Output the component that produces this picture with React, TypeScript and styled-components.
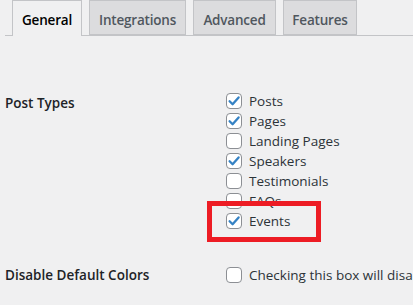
import React from "react";
import styled, { createGlobalStyle } from "styled-components";

const GlobalStyle = createGlobalStyle`
  html, body {
    margin: 0;
    padding: 0;
    background: #f0f0f1;
    font-family: "Open Sans", "Noto Sans", Arial, sans-serif;
    color: #1d2327;
    overflow: hidden;
  }
`;

const Page = styled.div`
  width: 413px;
  height: 305px;
  padding-left: 5px;
  box-sizing: border-box;
  overflow: hidden;
`;

const TabBar = styled.nav`
  display: flex;
  align-items: flex-end;
  height: 36px;
  padding-top: 1px;
  box-sizing: border-box;
  border-bottom: 1px solid #c3c4c7;
`;

const Tab = styled.a<{ $active?: boolean; $w: number }>`
  display: block;
  box-sizing: border-box;
  height: ${(p) => (p.$active ? "36px" : "35px")};
  margin-left: 7px;
  margin-bottom: ${(p) => (p.$active ? "-1px" : "0")};
  width: ${(p) => p.$w}px;
  padding-top: 2px;
  text-align: center;
  border: 1px solid #c3c4c7;
  border-bottom: ${(p) => (p.$active ? "none" : "1px solid #c3c4c7")};
  background: ${(p) => (p.$active ? "#f0f0f1" : "#dcdcde")};
  color: ${(p) => (p.$active ? "#000" : "#50575e")};
  font-size: 13.5px;
  font-weight: 600;
  line-height: 34px;
  letter-spacing: -0.2px;
  white-space: nowrap;
`;

const Table = styled.div`
  display: flex;
  flex-direction: column;
  gap: 34px;
  margin-top: 55px;
`;

const Row = styled.div`
  display: grid;
  grid-template-columns: 221px 1fr;
`;

const Th = styled.div<{ $top?: number }>`
  padding-top: ${(p) => p.$top ?? 0}px;
  font-size: 13.5px;
  line-height: 20px;
  font-weight: 600;
  color: #1d2327;
`;

const Options = styled.div`
  position: relative;
  display: flex;
  flex-direction: column;
  min-width: 0;
`;

const Option = styled.label`
  display: flex;
  align-items: center;
  gap: 7px;
  height: 20px;
  font-size: 13.5px;
  color: #2c3338;
  white-space: nowrap;
`;

const Box = styled.span`
  display: inline-flex;
  align-items: center;
  justify-content: center;
  width: 16px;
  height: 16px;
  box-sizing: border-box;
  flex: none;
  border: 1px solid #8c8f94;
  border-radius: 4px;
  background: #fff;
`;

const Highlight = styled.div`
  position: absolute;
  left: -19px;
  top: 110px;
  width: 114px;
  height: 41px;
  box-sizing: border-box;
  border: 5px solid #ed1c24;
  pointer-events: none;
`;

const Check = ({ on }: { on?: boolean }) => (
  <Box>
    {on && (
      <svg width="14" height="14" viewBox="0 0 14 14">
        <path
          d="M2.6 7.2 L5.6 10.2 L11.6 3.4"
          fill="none"
          stroke="#3582c4"
          strokeWidth="2.3"
          strokeLinecap="round"
          strokeLinejoin="round"
        />
      </svg>
    )}
  </Box>
);

const postTypes = [
  { label: "Posts", on: true },
  { label: "Pages", on: true },
  { label: "Landing Pages", on: false },
  { label: "Speakers", on: true },
  { label: "Testimonials", on: false },
  { label: "FAQs", on: false },
  { label: "Events", on: true },
];

const tabs = [
  { label: "General", w: 70, active: true },
  { label: "Integrations", w: 97 },
  { label: "Advanced", w: 83 },
  { label: "Features", w: 74 },
];

export default function App() {
  return (
    <Page>
      <GlobalStyle />
      <TabBar>
        {tabs.map((t) => (
          <Tab key={t.label} $active={t.active} $w={t.w}>
            {t.label}
          </Tab>
        ))}
      </TabBar>
      <Table>
        <Row>
          <Th $top={2}>Post Types</Th>
          <Options>
            {postTypes.map((p) => (
              <Option key={p.label}>
                <Check on={p.on} />
                {p.label}
              </Option>
            ))}
            <Highlight />
          </Options>
        </Row>
        <Row>
          <Th>Disable Default Colors</Th>
          <Options>
            <Option>
              <Check />
              Checking this box will disable the default colors
            </Option>
          </Options>
        </Row>
      </Table>
    </Page>
  );
}
